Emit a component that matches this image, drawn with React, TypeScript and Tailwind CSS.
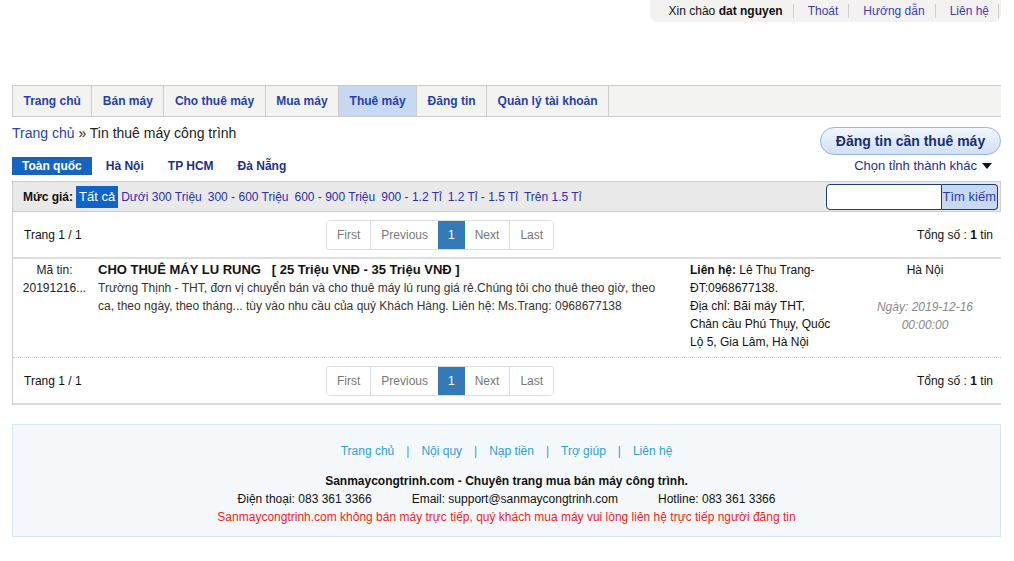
import React from 'react'

const font = { fontFamily: '"Liberation Sans", Arial, sans-serif' }

const navItems = ['Trang chủ', 'Bán máy', 'Cho thuê máy', 'Mua máy', 'Thuê máy', 'Đăng tin', 'Quản lý tài khoản']
const regions = ['Toàn quốc', 'Hà Nội', 'TP HCM', 'Đà Nẵng']
const prices = ['Dưới 300 Triệu', '300 - 600 Triệu', '600 - 900 Triệu', '900 - 1.2 Tỉ', '1.2 Tỉ - 1.5 Tỉ', 'Trên 1.5 Tỉ']

function Sep() {
  return <span className="ml-[10px] mr-[14px] inline-block h-[14px] w-px bg-[#cfcfcf]" />
}

function Pager() {
  const items = ['First', 'Previous', '1', 'Next', 'Last']
  return (
    <div className="flex h-[30px] overflow-hidden rounded-[4px] border border-[#ddd]">
      {items.map((t, i) => (
        <span
          key={t}
          className={
            'flex items-center px-[10px] text-[12px] ' +
            (t === '1' ? 'bg-[#337ab7] text-white' : 'text-[#777] bg-white') +
            (i > 0 && t !== '1' && items[i - 1] !== '1' ? ' border-l border-[#ddd]' : '')
          }
        >
          {t}
        </span>
      ))}
    </div>
  )
}

function PagerRow() {
  return (
    <div className="flex h-[45px] items-center text-[12px] text-[#111]">
      <div className="w-[313px] pl-[11px]">Trang 1 / 1</div>
      <Pager />
      <div className="flex-1 pr-[8px] text-right">
        Tổng số : <b>1</b> tin
      </div>
    </div>
  )
}

export default function App() {
  return (
    <div className="min-h-[561px] bg-white" style={font}>
      {/* Top user bar */}
      <div className="flex justify-end pr-[13px]">
        <div className="flex h-[22px] items-center rounded-b-[8px] bg-[#f3f2f1] pl-[19px] pr-[2px] text-[12px]">
          <span className="text-[#111]">
            Xin chào <b>dat nguyen</b>
          </span>
          <Sep />
          <span className="text-[#3b3bb3]">Thoát</span>
          <Sep />
          <span className="text-[#3b3bb3]">Hướng dẫn</span>
          <Sep />
          <span className="text-[#3b3bb3]">Liên hệ</span>
          <span className="ml-[9px] inline-block h-[14px] w-px bg-[#cfcfcf]" />
        </div>
      </div>

      <div className="mx-[12px] w-[989px]">
        {/* Main nav */}
        <div className="mt-[63px] flex h-[32px] border-y border-[#ccc] border-l bg-[#f3f3f1]">
          {navItems.map(t => (
            <div
              key={t}
              className={
                'flex items-center border-r border-[#ccc] px-[10.5px] text-[12px] font-bold text-[#2540b0] ' +
                (t === 'Thuê máy' ? 'bg-[#c6d9f1]' : '')
              }
            >
              {t}
            </div>
          ))}
        </div>

        {/* Breadcrumb + button */}
        <div className="flex items-start justify-between">
          <div className="mt-[6px] text-[14px] text-[#222]">
            <span className="text-[#2a3fb0]">Trang chủ</span> » Tin thuê máy công trình
          </div>
          <div className="mt-[10px] flex h-[28px] w-[181px] items-center justify-center rounded-full border border-[#9bb3dc] bg-gradient-to-b from-[#f2f7fe] to-[#cfe0f6] text-[14px] font-bold text-[#1c2d6e]">
            Đăng tin cần thuê máy
          </div>
        </div>

        {/* Regions */}
        <div className="mt-[2px] flex h-[18px] items-center justify-between">
          <div className="flex gap-[4px]">
            {regions.map((r, i) => (
              <span
                key={r}
                className={
                  'flex h-[18px] items-center px-[10px] text-[12px] font-bold ' +
                  (i === 0 ? 'bg-[#1565c0] text-white' : 'text-[#1d2f8a]')
                }
              >
                {r}
              </span>
            ))}
          </div>
          <div className="flex items-center pr-[9px] text-[13px] text-[#1d2f8a]">
            Chọn tỉnh thành khác
            <svg className="ml-[5px]" width="10" height="6" viewBox="0 0 10 6">
              <path d="M0 0h10L5 6z" fill="#111" />
            </svg>
          </div>
        </div>

        {/* Price filter */}
        <div className="mt-[6px] flex h-[31px] items-center justify-between border border-[#ccc] bg-[#e9e9e9]">
          <div className="flex items-center pl-[10px] text-[12px]">
            <b className="text-[#111]">Mức giá:</b>
            <span className="ml-[3px] flex h-[22px] items-center bg-[#0f64c8] px-[3px] text-[13px] text-white">Tất cả</span>
            <div className="ml-[3px] flex gap-[6px] text-[#2a2fb0]">
              {prices.map(p => (
                <span key={p}>{p}</span>
              ))}
            </div>
          </div>
          <div className="mr-[2px] flex h-[26px]">
            <div className="w-[116px] rounded-l-[4px] border border-[#1f3a7a] bg-white" />
            <div className="flex items-center rounded-r-[4px] border border-l-0 border-[#1f3a7a] bg-[#c6d9f1] px-[1px] text-[13px] text-[#2a3bb0]">
              Tìm kiếm
            </div>
          </div>
        </div>

        {/* Results */}
        <div className="border-l border-[#ccc]">
          <div className="border-b-2 border-[#ddd]">
            <PagerRow />
          </div>
          <div className="flex border-b border-dotted border-[#ccc] pb-[6px] pt-[2px] text-[12px] leading-[18px] text-[#222]">
            <div className="w-[83px] text-center">
              <div>Mã tin:</div>
              <div>20191216...</div>
            </div>
            <div className="w-[592px] pl-[2px]">
              <div className="text-[13px] font-bold text-[#111]">
                CHO THUÊ MÁY LU RUNG&nbsp;&nbsp;&nbsp;[ 25 Triệu VNĐ - 35 Triệu VNĐ ]
              </div>
              <div className="pr-[20px] text-[#333]">
                Trường Thịnh - THT, đơn vị chuyển bán và cho thuê máy lú rung giá rẻ.Chúng tôi cho thuê theo giờ, theo ca,
                theo ngày, theo tháng... tùy vào nhu cầu của quý Khách Hàng. Liên hệ: Ms.Trang: 0968677138
              </div>
            </div>
            <div className="w-[150px] pl-[2px] text-[#111]">
              <div>
                <b>Liên hệ:</b> Lê Thu Trang-
                <br />
                ĐT:0968677138.
              </div>
              <div>
                Địa chỉ: Bãi máy THT,
                <br />
                Chân cầu Phú Thụy, Quốc
                <br />
                Lộ 5, Gia Lâm, Hà Nội
              </div>
            </div>
            <div className="ml-[14px] w-[146px] text-center">
              <div className="text-[#111]">Hà Nội</div>
              <div className="mt-[19px] italic text-[#888]">
                Ngày: 2019-12-16
                <br />
                00:00:00
              </div>
            </div>
          </div>
          <div className="border-b-2 border-[#ddd]">
            <PagerRow />
          </div>
        </div>

        {/* Footer */}
        <div className="mt-[19px] border border-[#d8e8f0] bg-[#f4f8fa] pb-[9px] pt-[17px] text-center text-[12px]">
          <div className="flex justify-center gap-[12px] text-[#2ba0d8]">
            <span>Trang chủ</span>
            <span>|</span>
            <span>Nội quy</span>
            <span>|</span>
            <span>Nạp tiền</span>
            <span>|</span>
            <span>Trợ giúp</span>
            <span>|</span>
            <span>Liên hệ</span>
          </div>
          <div className="mt-[12px] font-bold leading-[18px] text-[#111]">
            Sanmaycongtrinh.com - Chuyên trang mua bán máy công trình.
          </div>
          <div className="flex justify-center gap-[40px] leading-[18px] text-[#111]">
            <span>Điện thoại: 083 361 3366</span>
            <span>Email: support@sanmaycongtrinh.com</span>
            <span>Hotline: 083 361 3366</span>
          </div>
          <div className="leading-[19px] text-[#ff1a1a]">
            Sanmaycongtrinh.com không bán máy trực tiếp, quý khách mua máy vui lòng liên hệ trực tiếp người đăng tin
          </div>
        </div>
      </div>
    </div>
  )
}
